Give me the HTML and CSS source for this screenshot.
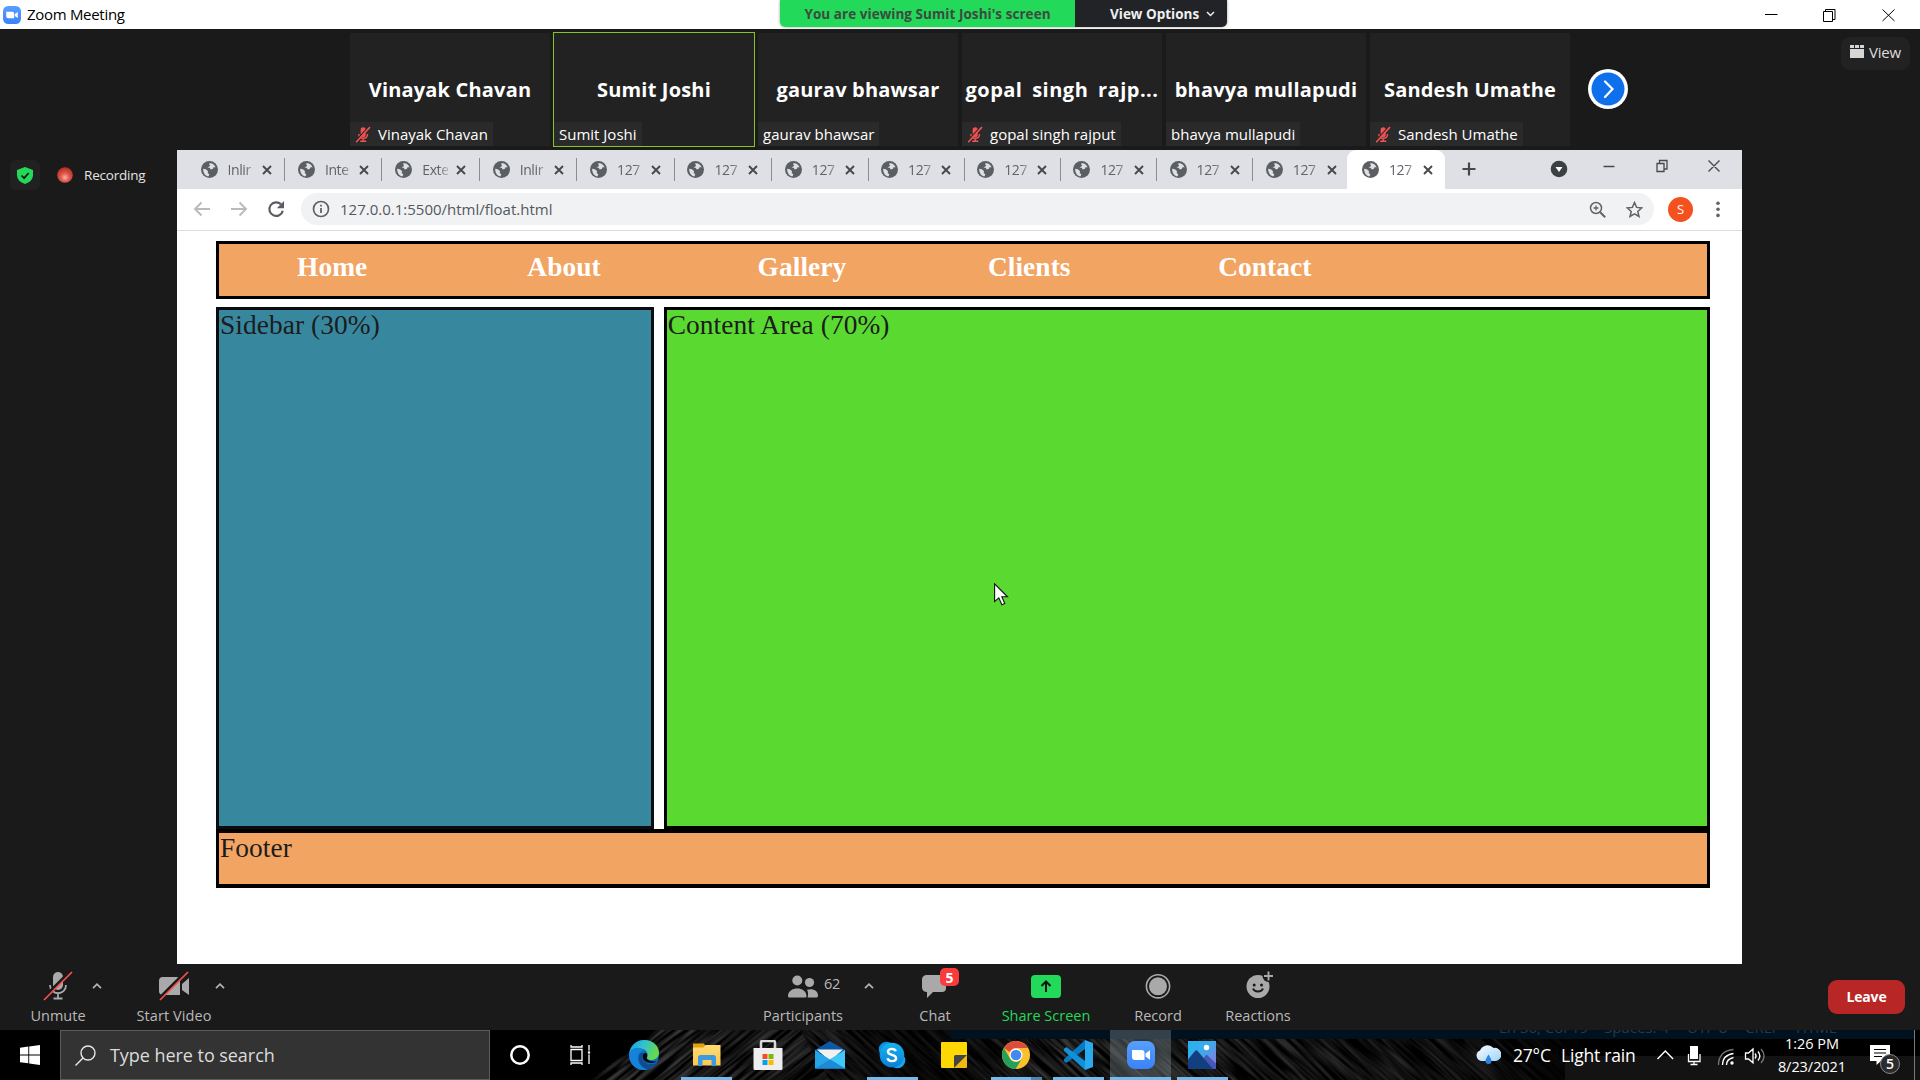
FILE: index.html
```html
<!DOCTYPE html>
<html lang="en">
<head>
<meta charset="utf-8">
<title>Zoom Meeting</title>
<link rel="stylesheet" href="styles.css">
</head>
<body>
<svg class="defs" width="0" height="0">
  <defs>
    <linearGradient id="zoomBlue" x1="0" y1="0" x2="0" y2="1"><stop offset="0" stop-color="#57a0fd"/><stop offset="1" stop-color="#3b82f8"/></linearGradient>
    <linearGradient id="edgeTop" x1="0" y1="0" x2="1" y2="0.4"><stop offset="0" stop-color="#1b9de2"/><stop offset=".5" stop-color="#2fc2cf"/><stop offset="1" stop-color="#67d94c"/></linearGradient>
    <linearGradient id="skype" x1="0" y1="0" x2="0" y2="1"><stop offset="0" stop-color="#14b4f0"/><stop offset="1" stop-color="#0a7fd6"/></linearGradient>
    <linearGradient id="folder" x1="0" y1="0" x2="0" y2="1"><stop offset="0" stop-color="#ffdc75"/><stop offset="1" stop-color="#fcc84e"/></linearGradient>
    <linearGradient id="sky" x1="0" y1="0" x2="1" y2="1"><stop offset="0" stop-color="#21b4ee"/><stop offset=".5" stop-color="#42a6ec"/><stop offset="1" stop-color="#a06ed6"/></linearGradient>
    <linearGradient id="cloud" x1="0" y1="0" x2="1" y2="1"><stop offset="0" stop-color="#fafdff"/><stop offset="1" stop-color="#9ed3f8"/></linearGradient>
    <radialGradient id="rec" cx=".5" cy=".65" r=".6"><stop offset="0" stop-color="#f7b5ac"/><stop offset=".45" stop-color="#e0594c"/><stop offset="1" stop-color="#b92f25"/></radialGradient>
    <symbol id="globe" viewBox="0 0 16 16"><circle cx="8" cy="8" r="8" fill="#5b5e63"/><path d="M2 7.200l2.600.6 2.100 1.900-.4 1.500 1.500 1.200-.6 2C4.200 14 2 11.500 2 7.200z M7.600 2.300c2.700-.6 5.300 1 6.100 3.900l-1.700-.5-.8 1.600-1.900.6-1.200-1.500-1.900-.3 2.300-1.400z" fill="#dfe0e5"/></symbol>
    <symbol id="cross" viewBox="0 0 10 10"><path d="M1 1l8 8M9 1l-8 8" stroke="#45484c" stroke-width="1.900" fill="none"/></symbol>
    <symbol id="mutemic" viewBox="0 0 16 18"><path d="M5.500 4a2.700 2.700 0 0 1 5.400 0v5a2.700 2.700 0 0 1-5.400 0z" fill="#f25353"/><path d="M3.600 8.500c0 6 9.200 6 9.200 0M8.200 13v3M5 16.200h6.500" stroke="#f25353" stroke-width="1.500" fill="none"/><path d="M0 17L14.500 1" stroke="#242424" stroke-width="2.400"/><path d="M.7 17.200L15.300 1.200" stroke="#f25353" stroke-width="1.700"/></symbol>
    <symbol id="caret" viewBox="0 0 10 6"><path d="M1 5.200l4-4 4 4" stroke="#b4b4b4" stroke-width="1.700" fill="none"/></symbol>
    <symbol id="camera" viewBox="0 0 28 28"><rect width="28" height="28" rx="8" fill="url(#zoomBlue)"/><path d="M5 9h9.500a3 3 0 0 1 3 3v7H8a3 3 0 0 1-3-3zM18.500 12.500L23 9.300v9.400l-4.500-3.200z" fill="#fff"/></symbol>
  </defs>
</svg>

<div class="screen">
  <header class="titlebar">
    <svg class="app-icon" width="18" height="18"><use href="#camera"/></svg>
    <span class="app-title">Zoom Meeting</span>
    <svg class="win-ctl" width="130" height="14" viewBox="0 0 130 14" fill="none" stroke="#000" stroke-width="1"><path d="M0 6.500h12.500M58.500 3.500h9v10h-9zM60.500 3.500v-2h9.500v10h-2M117.500 1.500l12 11.500M129.500 1.500L117.500 13"/></svg>
    <div class="share-banner"><span class="viewing">You are viewing Sumit Joshi's screen</span><span class="options">View Options <svg width="9" height="6" viewBox="0 0 9 6"><path d="M1 1l3.500 3.500L8 1" stroke="#eee" stroke-width="1.500" fill="none"/></svg></span></div>
  </header>

  <section class="gallery">
    <div class="tile"><b>Vinayak Chavan</b><span class="tag"><svg width="16" height="17"><use href="#mutemic"/></svg><i>Vinayak Chavan</i></span></div>
    <div class="tile speaking"><b>Sumit Joshi</b><span class="tag"><i>Sumit Joshi</i></span></div>
    <div class="tile"><b>gaurav bhawsar</b><span class="tag"><i>gaurav bhawsar</i></span></div>
    <div class="tile"><b class="long">gopal singh rajp...</b><span class="tag"><svg width="16" height="17"><use href="#mutemic"/></svg><i>gopal singh rajput</i></span></div>
    <div class="tile"><b>bhavya mullapudi</b><span class="tag"><i>bhavya mullapudi</i></span></div>
    <div class="tile"><b>Sandesh Umathe</b><span class="tag"><svg width="16" height="17"><use href="#mutemic"/></svg><i>Sandesh Umathe</i></span></div>
    <svg class="next" width="40" height="40" viewBox="0 0 40 40"><circle cx="20" cy="20" r="20" fill="#fff"/><circle cx="20" cy="20" r="16.500" fill="#0e71eb"/><path d="M17 12.500l7.500 7.500-7.500 8" stroke="#fff" stroke-width="2.200" fill="none" stroke-linecap="round"/></svg>
    <div class="view-btn"><svg width="14" height="13" viewBox="0 0 14 13" fill="#d6d6d6"><path d="M0 0h4v3H0zM5 0h4v3H5zM10 0h4v3h-4zM0 4h14v9H0z"/></svg><span>View</span></div>
  </section>

  <main class="stage">
    <aside class="status">
      <div class="shield"><svg width="16" height="17" viewBox="0 0 16 17"><path d="M8 0l8 3v5c0 4.500-3.500 7.500-8 9-4.500-1.500-8-4.500-8-9V3z" fill="#23d959"/><path d="M4.500 8.500l2.600 2.700L11.700 6" stroke="#1a1a1a" stroke-width="1.800" fill="none"/></svg></div>
      <svg class="rec" width="16" height="16" viewBox="0 0 16 16"><circle cx="8" cy="8" r="7.800" fill="url(#rec)"/></svg>
      <span class="rec-text">Recording</span>
    </aside>

    <div class="browser">
      <div class="tabstrip">
        <div class="tab wide"><svg width="17" height="17"><use href="#globe"/></svg><span>Inlir</span><svg width="10" height="10"><use href="#cross"/></svg></div>
        <div class="tab wide"><svg width="17" height="17"><use href="#globe"/></svg><span>Inte</span><svg width="10" height="10"><use href="#cross"/></svg></div>
        <div class="tab wide"><svg width="17" height="17"><use href="#globe"/></svg><span>Exte</span><svg width="10" height="10"><use href="#cross"/></svg></div>
        <div class="tab wide"><svg width="17" height="17"><use href="#globe"/></svg><span>Inlir</span><svg width="10" height="10"><use href="#cross"/></svg></div>
        <div class="tab wide"><svg width="17" height="17"><use href="#globe"/></svg><span>127</span><svg width="10" height="10"><use href="#cross"/></svg></div>
        <div class="tab wide"><svg width="17" height="17"><use href="#globe"/></svg><span>127</span><svg width="10" height="10"><use href="#cross"/></svg></div>
        <div class="tab"><svg width="17" height="17"><use href="#globe"/></svg><span>127</span><svg width="10" height="10"><use href="#cross"/></svg></div>
        <div class="tab"><svg width="17" height="17"><use href="#globe"/></svg><span>127</span><svg width="10" height="10"><use href="#cross"/></svg></div>
        <div class="tab"><svg width="17" height="17"><use href="#globe"/></svg><span>127</span><svg width="10" height="10"><use href="#cross"/></svg></div>
        <div class="tab"><svg width="17" height="17"><use href="#globe"/></svg><span>127</span><svg width="10" height="10"><use href="#cross"/></svg></div>
        <div class="tab"><svg width="17" height="17"><use href="#globe"/></svg><span>127</span><svg width="10" height="10"><use href="#cross"/></svg></div>
        <div class="tab last"><svg width="17" height="17"><use href="#globe"/></svg><span>127</span><svg width="10" height="10"><use href="#cross"/></svg></div>
        <div class="tab active"><svg width="17" height="17"><use href="#globe"/></svg><span>127</span><svg width="10" height="10"><use href="#cross"/></svg></div>
        <svg class="strip-ctl" width="270" height="20" viewBox="0 0 270 20" fill="none" stroke="#45484c"><path d="M10 3.500v13M3.500 10h13" stroke-width="2.200"/><circle cx="100" cy="10" r="8.300" fill="#3c4043" stroke="none"/><path d="M96.500 8h7L100 13z" fill="#fff" stroke="none"/><path d="M144.500 7.500h11M198 4.500h7v8h-7zM200.500 4.500v-3h7.500v8.500h-3M249.500 1.500l11 11M260.500 1.500l-11 11" stroke-width="1.300"/></svg>
      </div>
      <div class="toolbar">
        <svg class="nav" width="111" height="20" viewBox="0 0 111 20" fill="none"><path d="M20 10H5.500M11.500 3.500L5 10l6.500 6.500" stroke="#b9babc" stroke-width="1.900"/><path d="M41 10h14.500M49.500 3.500L56 10l-6.500 6.500" stroke="#b9babc" stroke-width="1.900"/><path d="M91 5.300a6.800 6.800 0 1 0 1.800 6.400" stroke="#5a5d61" stroke-width="2.200"/><path d="M94 2v7.300h-7.200z" fill="#5a5d61"/></svg>
        <div class="omnibox">
          <svg width="18" height="18" viewBox="0 0 18 18" fill="none" stroke="#5f6368"><circle cx="9" cy="9" r="7.500" stroke-width="1.700"/><path d="M9 8v5M9 4.700v1.800" stroke-width="1.800"/></svg>
          <span class="url">127.0.0.1:5500/html/float.html</span>
          <svg class="mag" width="17" height="17" viewBox="0 0 17 17" fill="none" stroke="#5f6368"><circle cx="7" cy="7" r="5.500" stroke-width="1.500"/><path d="M11.200 11.200l5 5" stroke-width="2"/><path d="M7 4.500v5M4.500 7h5" stroke-width="1.300"/></svg>
          <svg class="star" width="17" height="17" viewBox="0 0 17 17"><path d="M8.500 1.500l2.100 4.900 5.200.5-4 3.500 1.200 5.100-4.500-2.700L4 15.500l1.200-5.100-4-3.500 5.200-.5z" fill="none" stroke="#5f6368" stroke-width="1.500"/></svg>
        </div>
        <span class="avatar">S</span>
        <svg class="dots" width="4" height="17" viewBox="0 0 4 17" fill="#5f6368"><circle cx="2" cy="2.200" r="1.800"/><circle cx="2" cy="8.300" r="1.800"/><circle cx="2" cy="14.400" r="1.800"/></svg>
      </div>
      <div class="page">
        <nav class="menu"><a>Home</a><a>About</a><a>Gallery</a><a>Clients</a><a>Contact</a></nav>
        <div class="columns">
          <div class="sidebar">Sidebar (30%)</div>
          <div class="content">Content Area (70%)</div>
        </div>
        <div class="footer">Footer</div>
      </div>
      <svg class="cursor" width="15" height="23" viewBox="0 0 15 23"><path d="M.6.8v17.800l4.200-3.800 3.100 7 2.900-1.300-3-6.700h5.700z" fill="#fff" stroke="#111" stroke-width="1.100"/></svg>
    </div>
  </main>

  <section class="controls">
    <div class="ctl c-mic"><svg width="30" height="30" viewBox="0 0 30 30"><path d="M10 6a5 5 0 0 1 10 0v8a5 5 0 0 1-10 0z" fill="#a9a9a9"/><path d="M7 14c0 11 16 11 16 0M15 22v5M10.500 27.500h9" stroke="#a9a9a9" stroke-width="1.800" fill="none"/><path d="M0 27.500L27.500 0" stroke="#1a1a1a" stroke-width="3"/><path d="M1 29L29 1" stroke="#f4504f" stroke-width="1.700"/></svg><span>Unmute</span></div>
    <svg class="up u1" width="10" height="6"><use href="#caret"/></svg>
    <div class="ctl c-video"><svg width="30" height="30" viewBox="0 0 30 30"><path d="M4 6h14a3 3 0 0 1 3 3v15H4a4 4 0 0 1-4-4V9.500A3.500 3.500 0 0 1 4 6zM23 13l7-6v17l-7-5z" fill="#a9a9a9"/><path d="M0 27.500L27.500 0" stroke="#1a1a1a" stroke-width="3"/><path d="M1 29L29 1" stroke="#f4504f" stroke-width="1.700"/></svg><span>Start Video</span></div>
    <svg class="up u2" width="10" height="6"><use href="#caret"/></svg>
    <div class="ctl c-people"><svg width="30" height="30" viewBox="0 0 30 30" fill="#a9a9a9"><circle cx="9.300" cy="9.500" r="5"/><circle cx="21.500" cy="11.500" r="4.600"/><path d="M0 25c0-10 18.500-10 18.500 0 0 1-.7 1.500-1.700 1.500H1.700C.7 26.500 0 26 0 25zM19 18.800c5-1.800 11 .2 11 5.700 0 1.400-.6 2-1.800 2h-8.700c1-2.500.7-5.300-.5-7.700z"/></svg><span>Participants</span><em class="count">62</em></div>
    <svg class="up u3" width="10" height="6"><use href="#caret"/></svg>
    <div class="ctl c-chat"><svg width="30" height="30" viewBox="0 0 30 30" fill="#a9a9a9"><path d="M7 4h15a4 4 0 0 1 4 4v9a4 4 0 0 1-4 4H13l-6 6v-6a5 5 0 0 1-5-4V8a4.500 4.500 0 0 1 5-4z"/></svg><span>Chat</span><em class="badge">5</em></div>
    <div class="ctl c-share"><svg width="30" height="30" viewBox="0 0 30 30"><rect y="4" width="30" height="23" rx="4" fill="#23d959"/><path d="M15 21V10.500M10.500 15l4.500-4.500 4.500 4.500" stroke="#151515" stroke-width="2" fill="none"/></svg><span>Share Screen</span></div>
    <div class="ctl c-record"><svg width="30" height="30" viewBox="0 0 30 30"><circle cx="15" cy="15.300" r="11.600" fill="none" stroke="#a9a9a9" stroke-width="1.600"/><circle cx="15" cy="15.300" r="9" fill="#a9a9a9"/></svg><span>Record</span></div>
    <div class="ctl c-react"><svg width="30" height="30" viewBox="0 0 30 30"><circle cx="15" cy="15.500" r="11.500" fill="#a9a9a9"/><circle cx="25.500" cy="5" r="6" fill="#1a1a1a"/><path d="M25.500.5v9M21 5h9" stroke="#a9a9a9" stroke-width="1.900"/><circle cx="11.200" cy="14" r="1.500" fill="#1a1a1a"/><circle cx="18.500" cy="14" r="1.500" fill="#1a1a1a"/><path d="M10 17.500c1.500 4 8.500 4 10 0" stroke="#1a1a1a" stroke-width="2" fill="none"/></svg><span>Reactions</span></div>
    <button class="leave">Leave</button>
  </section>

  <footer class="taskbar">
    <svg class="fur" width="1920" height="50" viewBox="0 0 1920 50">
      <defs>
        <filter id="hair" x="0" y="0" width="1" height="1"><feTurbulence type="fractalNoise" baseFrequency="0.018 0.3" numOctaves="2" seed="4"/><feColorMatrix values="0 0 0 0 .17  0 0 0 0 .17  0 0 0 0 .17  2.400 0 0 0 -.8"/></filter>
        <linearGradient id="fade"><stop offset="0" stop-color="#000"/><stop offset=".12" stop-color="#000" stop-opacity=".1"/><stop offset=".3" stop-color="#000" stop-opacity=".35"/><stop offset=".38" stop-color="#000" stop-opacity=".8"/><stop offset=".52" stop-color="#000" stop-opacity=".2"/><stop offset=".66" stop-color="#000" stop-opacity=".3"/><stop offset=".88" stop-color="#000" stop-opacity=".5"/><stop offset="1" stop-color="#000"/></linearGradient>
        <clipPath id="left"><path d="M560 0h240l30 50H560z"/></clipPath>
        <clipPath id="right"><path d="M800 0h790v50H830z"/></clipPath>
      </defs>
      <g clip-path="url(#left)"><g transform="translate(400 200) rotate(-38)"><rect width="700" height="500" filter="url(#hair)" opacity=".6"/></g></g>
      <g clip-path="url(#right)"><g transform="translate(900 -600) rotate(42)"><rect width="1100" height="1100" filter="url(#hair)" opacity=".6"/></g></g>
      <rect x="490" width="1100" height="50" fill="url(#fade)"/>
      <path d="M1590 0h330v50h-330z" fill="#000"/><path d="M1565 26h355v24h-355z" fill="#131313"/>
    </svg>
    <div class="peek"><span class="p1">Ln 36, Col 19</span><span class="p2">Spaces: 4</span><span class="p3">UTF-8</span><span class="p4">CRLF</span><span class="p5">HTML</span></div>
    <div class="start"><svg width="20" height="20" viewBox="0 0 20 20" fill="#fff"><path d="M0 2.800L8.300 1.600V9.400H0zM9.200 1.500L20 0v9.400H9.200zM0 10.400h8.300v7.900L0 17.200zM9.200 10.400H20V20L9.200 18.500z"/></svg></div>
    <div class="search"><svg width="21" height="21" viewBox="0 0 21 21" fill="none" stroke="#e8e8e8" stroke-width="1.400"><circle cx="13" cy="8" r="7"/><path d="M8 13L.5 20.500"/></svg><span>Type here to search</span></div>
    <div class="apps">
      <div class="app"><svg width="30" height="30" viewBox="0 0 30 30"><circle cx="15" cy="15" r="8.700" fill="none" stroke="#fff" stroke-width="2.500"/></svg></div>
      <div class="app"><svg width="30" height="30" viewBox="0 0 30 30" fill="none" stroke="#fff" stroke-width="1.300"><path d="M4 9.500h11v11H4zM4 5v2h11V5M4 25v-2h11v2M22 5v19"/><path d="M20.500 11h3v3h-3z" fill="#fff" stroke="#000" stroke-width="0.800"/></svg></div>
      <div class="app"><svg width="30" height="30" viewBox="0 0 30 30"><circle cx="15" cy="15" r="15" fill="#0d6ac2"/><path d="M.2 13C2 5 8 0 15 0c9 0 15 6 15 12.500 0 5-4 7.500-8 7.500-3 0-4.500-1.200-4-2.200 1.300-2 1-6.500-3-8.300C9 7 3 9 .2 13z" fill="url(#edgeTop)"/><path d="M.2 13C3 7 11 6.500 15.500 10c-4 .5-7.500 5-6.500 10 1 5 5 8.500 10 9.500C8 32-1 24 .2 13z" fill="#1683da"/><path d="M11 13.500c-3 5-1 14.500 8.500 16C24 28 27 25 28.500 22.500c-6 3-14 1.500-15-4.500-.2-2 .6-3.600 1.500-4.500-1.500-.5-3-.5-4 0z" fill="#104d8e"/><path d="M14.200 14.500c-1.400 3 .3 8 8 8.500 3 .2 4.800-1 6-2-1.500 1-9 1-10.500-3 .8-1.500.5-3.300 0-4.500-1-.8-2.800-.5-3.500 1z" fill="#05090d"/></svg></div>
      <div class="app on"><svg width="30" height="30" viewBox="0 0 30 30"><path d="M2 3.500h11l1.500 2.500v4H2z" fill="#e2a20e"/><path d="M2 7.500h10.500L14.500 5H29.500v20.500H2z" fill="url(#folder)"/><path d="M7 26V17.500A2.500 2.500 0 0 1 9.500 15h13a2.500 2.500 0 0 1 2.500 2.500V26h-4.500v-6h-9v6z" fill="#3d9ae0"/></svg></div>
      <div class="app"><svg width="30" height="30" viewBox="0 0 30 30"><path d="M8 8V2.500A1.500 1.500 0 0 1 9.500 1h11A1.500 1.500 0 0 1 22 2.500V8" fill="none" stroke="#d8d8d8" stroke-width="2.600"/><path d="M.5 8h29v20.500a1.500 1.500 0 0 1-1.500 1.500H2a1.500 1.500 0 0 1-1.500-1.500z" fill="#eee"/><path d="M9.500 14h5v5h-5z" fill="#f25022"/><path d="M15.500 14h5v5h-5z" fill="#7fba00"/><path d="M9.500 20h5v5h-5z" fill="#00a4ef"/><path d="M15.500 20h5v5h-5z" fill="#ffb900"/></svg></div>
      <div class="app"><svg width="30" height="30" viewBox="0 0 30 30"><path d="M0 10L15 1l15 9v3H0z" fill="#0d57a5"/><path d="M2 9.500h26l-13 12z" fill="#f1f1f1"/><path d="M0 10l15 9.500L30 10v18.500H0z" fill="#25a5e8"/><path d="M15 19.500L30 10v18.500z" fill="#3fc8f8"/><path d="M0 28.500h30L15 19.500z" fill="#1c8ad6"/></svg></div>
      <div class="app on"><svg width="30" height="30" viewBox="0 0 30 30"><circle cx="9.500" cy="9.500" r="7.800" fill="#0f8fe0"/><circle cx="20.500" cy="20.500" r="7.800" fill="#1ba2ea"/><circle cx="15" cy="15" r="12.300" fill="url(#skype)"/><path d="M18.800 11.200c-.6-1.700-2-2.300-3.900-2.300-2.300 0-4 1-4 2.900 0 4 8.200 2 8.200 6.200 0 2-1.800 3.100-4.100 3.100s-4-.9-4.500-2.900" stroke="#fff" stroke-width="2.400" fill="none"/></svg></div>
      <div class="app"><svg width="30" height="30" viewBox="0 0 30 30"><path d="M3 2h24a1 1 0 0 1 1 1v12L15 28H3a1 1 0 0 1-1-1V3a1 1 0 0 1 1-1z" fill="#ffd803"/><path d="M15 28V16.500A1.500 1.500 0 0 1 16.500 15H28z" fill="#444"/><path d="M15 28l13-13v12a1 1 0 0 1-1 1z" fill="#efb90f"/></svg></div>
      <div class="app on multi"><svg width="30" height="30" viewBox="0 0 30 30"><circle cx="15" cy="15" r="14" fill="#fbc02e"/><path d="M2.900 8A14 14 0 0 1 27.100 8H15a7 7 0 0 0-6.300 4z" fill="#dd4b3e"/><path d="M2.900 8A14 14 0 0 0 14.500 29L20.700 19A7 7 0 0 1 8.900 18.500z" fill="#21a15a"/><circle cx="15" cy="15" r="6.500" fill="#fff"/><circle cx="15" cy="15" r="5.300" fill="#4688f1"/></svg></div>
      <div class="app on"><svg width="30" height="30" viewBox="0 0 30 30"><path d="M22 0L30 3v24l-8 3z" fill="#29a9ee"/><path d="M22 0L1 19.200v2L3.500 23 22 9z" fill="#0879c2"/><path d="M22 30L1 10.800v-2L3.500 7 22 21z" fill="#1191d8"/></svg></div>
      <div class="app on current"><svg width="28" height="28" viewBox="0 0 28 28"><use href="#camera"/></svg></div>
      <div class="app on"><svg width="30" height="30" viewBox="0 0 30 30"><path d="M1 1h28v28H1z" fill="url(#sky)"/><circle cx="19.500" cy="7.500" r="2.700" fill="#fff"/><path d="M12 24l7.500-9.500 9.500 9v5.500H10z" fill="#4458b8"/><path d="M1 19.500l7-8.500a1.800 1.800 0 0 1 2.600 0L26 29H1z" fill="#123f80"/></svg></div>
    </div>
    <div class="tray">
      <svg class="weather" width="26" height="22" viewBox="0 0 26 22"><path d="M6 17a5.500 5.500 0 0 1-1-10.500A8 8 0 0 1 18.500 4 6.500 6.500 0 0 1 21 17z" fill="url(#cloud)"/><path d="M13.500 10.500c1.700 3 3 4.500 3 6.500a3 3 0 0 1-6 0c0-2 1.300-3.500 3-6.500z" fill="#2a82e4"/></svg>
      <span class="temp">27°C</span><span class="cond">Light rain</span>
      <svg class="tray-icons" width="110" height="24" viewBox="0 0 110 24" fill="none" stroke="#fff"><path d="M1.500 16l7.800-8 7.800 8" stroke-width="1.400"/><path d="M34 3h8v13h-8z" fill="#fff" stroke="none"/><path d="M32.500 11v7.500H44V11M38 18v4M34.500 21.500h7" stroke-width="1.300"/><path d="M62.500 22c0-9 5.500-15 15-15.500" stroke="#777" stroke-width="1.300"/><path d="M66.500 22c0-6.500 4-10.500 11-11.500M70.500 22c0-4 2.500-6.500 7-7.500" stroke-width="1.300"/><circle cx="76" cy="20" r="1.700" fill="#fff" stroke="none"/><path d="M89.500 10v6h3l4.500 3.800V6L92.500 10zM99 10.500c1.300 1.500 1.300 3.500 0 5M102 8.500c2.500 3 2.500 6 0 9" stroke-width="1.300"/><path d="M105 6c4 4.500 4 9.500 0 14" stroke="#777" stroke-width="1.300"/></svg>
      <div class="clock"><span class="time">1:26 PM</span><span class="date">8/23/2021</span></div>
      <div class="notif"><svg width="20" height="20" viewBox="0 0 20 20"><path d="M0 0h20v16h-9l-4.500 4v-4H0z" fill="#fff"/><path d="M4 4.500h12M4 8h12M4 11.500h8" stroke="#000" stroke-width="1.200"/></svg><em>5</em></div>
    </div>
  </footer>
</div>
</body>
</html>
```
FILE: styles.css
```css
* { box-sizing: border-box; }
body { margin: 0; background: #1a1a1a; font-family: "Open Sans", "Noto Sans", sans-serif; overflow: hidden; }
svg { display: block; flex: none; }
i, em { font-style: normal; }
span, b, i, em { white-space: nowrap; }
.defs { position: absolute; }
.screen { width: 1920px; height: 1080px; display: flex; flex-direction: column; }

/* title bar */
.titlebar { position: relative; height: 29px; background: #fff; display: flex; align-items: center; padding: 0 25px 0 3px; flex: none; }
.app-title { margin-left: 6px; font-size: 15px; color: #000; letter-spacing: -0.3px; line-height: 20px; padding-bottom: 1px; }
.win-ctl { margin-left: auto; }
.share-banner { position: absolute; left: 780px; top: 0; height: 27px; display: flex; border-radius: 0 0 5px 5px; overflow: hidden; font-size: 13.500px; font-weight: 700; line-height: 28px; box-shadow: 0 0 3px #999; }
.viewing { width: 295px; background: #23d959; color: #3d4a40; text-align: center; letter-spacing: 0.050px; }
.options { width: 152px; background: #222327; color: #f0f0f0; display: flex; align-items: center; gap: 7px; padding-left: 35px; padding-top: 1px; }

/* participants */
.gallery { height: 121px; display: flex; gap: 4px; padding: 4px 10px 4px 350px; flex: none; }
.tile { width: 200px; height: 113px; background: #222; display: flex; flex-direction: column; justify-content: flex-end; align-items: flex-start; flex: none; }
.speaking { outline: 1px solid #85c51f; }
.tile b { align-self: center; color: #fff; font-size: 20px; line-height: 28px; margin-bottom: 18px; letter-spacing: 0.180px; }
.tile b.long { letter-spacing: 0.500px; word-spacing: 4px; }
.tag { height: 24px; background: #2a2a2a; display: flex; align-items: center; padding: 0 5px; gap: 7px; color: #fff; }
.tag i { font-size: 15px; line-height: 24px; }
.next { margin: 36px 0 0 14px; }
.view-btn { margin: 4px 0 0 auto; width: 69px; height: 33px; border-radius: 9px; background: #222; color: #ddd; display: flex; align-items: center; gap: 5px; padding-left: 9px; font-size: 15px; letter-spacing: -0.200px; padding-bottom: 4px; }

/* stage */
.stage { height: 814px; display: flex; flex: none; }
.status { width: 177px; height: 50px; padding-left: 10px; display: flex; align-items: center; }
.shield { width: 30px; height: 30px; border-radius: 6px; background: #212121; display: flex; align-items: center; justify-content: center; }
.rec { margin-left: 17px; }
.rec-text { margin-left: 11px; color: #e4e4e4; font-size: 13.500px; letter-spacing: -0.200px; }
.browser { position: relative; width: 1565px; background: #fff; display: flex; flex-direction: column; }
.tabstrip { height: 39px; background: #dfe0e5; display: flex; padding-left: 11px; }
.tab { width: 96.200px; height: 39px; display: flex; align-items: center; padding-left: 12.500px; position: relative; flex: none; }
.tab.wide { width: 97.400px; }
.tab::after { content: ""; width: 1px; height: 23px; background: #8b8c90; margin-left: 12.500px; }
.tab.last::after, .tab.active::after { display: none; }
.tab span { width: 26px; margin: 0 8px 0 10px; font-size: 14px; color: #5f6368; letter-spacing: -0.400px; -webkit-mask-image: linear-gradient(90deg, #000 65%, rgba(0, 0, 0, .3)); }
.tab.active { width: 98px; background: #fff; border-radius: 9px 9px 0 0; margin-left: -2px; padding-left: 14.500px; }
.strip-ctl { margin: 9px 0 0 14px; }
.toolbar { height: 42px; display: flex; align-items: center; border-bottom: 1px solid #dcdcdc; padding: 0 0 1px 13px; flex: none; }
.omnibox { width: 1353px; height: 32px; border-radius: 16px; background: #f1f2f4; display: flex; align-items: center; padding: 0 11px 0 11px; }
.url { margin-left: 10px; font-size: 15px; color: #55585c; }
.mag { margin-left: auto; }
.star { margin-left: 20px; }
.avatar { width: 25px; height: 25px; margin-left: 14px; border-radius: 50%; background: #f4511e; color: #fff; text-align: center; font-size: 13px; line-height: 25px; }
.dots { margin-left: 23px; }

/* shared web page */
.page { padding: 10px 32px 0 39px; font-family: "Liberation Serif", serif; font-size: 27.400px; color: #1c1c1c; letter-spacing: 0.070px; }
.menu { width: 1494px; height: 58px; border: 3px solid #000; background: #f2a463; display: flex; padding-left: 78px; line-height: 46px; font-weight: 700; color: #fff; }
.menu a { width: 230.300px; }
.columns { display: flex; gap: 10px; margin-top: 8px; line-height: 31px; }
.sidebar { width: 438px; height: 522px; border: 3px solid #0c0c10; background: #37889f; padding: 0 1px; }
.content { width: 1047px; height: 522px; border: 3px solid #000; background: #5ad931; padding: 0 1px; }
.footer { width: 1494px; height: 59px; border: 4px solid #000; border-width: 4px 3px; background: #f2a463; line-height: 31px; padding-left: 1px; }
.cursor { position: absolute; left: 817px; top: 433px; }

/* meeting controls */
.controls { height: 66px; display: flex; background: #1a1a1a; color: #b9b9b9; flex: none; }
.ctl { position: relative; width: 100px; display: flex; flex-direction: column; align-items: center; padding-top: 7px; flex: none; }
.ctl svg { margin-bottom: 4px; }
.ctl span { font-size: 14.500px; line-height: 22px; }
.up { margin-top: 19px; }
.c-mic { margin-left: 8px; }
.u1 { margin-left: -16px; }
.c-video { margin-left: 22px; }
.c-video span { letter-spacing: 0.100px; }
.u2 { margin-left: -9px; }
.c-people { margin-left: 528px; }
.u3 { margin-left: 11px; }
.c-chat { margin-left: 11px; }
.c-share { margin-left: 11px; }
.c-share span { color: #23d959; }
.c-record { margin-left: 12px; }
.c-react { margin-left: 0; }
.count { position: absolute; left: 71px; top: 10px; font-size: 14.500px; line-height: 20px; letter-spacing: -0.400px; }
.badge { position: absolute; left: 55px; top: 4px; width: 19px; height: 18px; border-radius: 5px; background: #f93b3b; color: #fff; font-size: 14px; font-weight: 700; line-height: 19px; text-align: center; }
.leave { margin: 16px 15px 0 auto; width: 77px; height: 34px; border: 0; border-radius: 9px; background: #b92626; color: #fff; font: 700 14px "Open Sans", sans-serif; letter-spacing: -0.150px; padding: 0 0 1px; }

/* taskbar */
.taskbar { position: relative; height: 50px; background: #000; display: flex; overflow: hidden; color: #fff; flex: none; }
.fur { position: absolute; left: 0; top: 0; }
.peek { position: absolute; left: 951px; top: 0; width: 963px; height: 9px; background: #001220; overflow: hidden; color: #2c3940; font-size: 15px; line-height: 9px; display: flex; padding-left: 548px; }
.peek span { position: relative; top: -7px; }
.p1 { width: 105px; } .p2 { width: 83px; } .p3 { width: 58px; } .p4 { width: 51px; }
.start { position: relative; width: 60px; display: flex; align-items: center; justify-content: center; }
.search { position: relative; width: 430px; background: #333; border: 1px solid #5c5c5c; display: flex; align-items: center; gap: 14px; padding-left: 14px; color: #dcdcdc; font-size: 18px; letter-spacing: -0.050px; }
.apps { position: relative; display: flex; margin-left: -1px; }
.app { width: 62px; display: flex; align-items: center; justify-content: center; position: relative; }
.app.on::after { content: ""; position: absolute; left: 6px; right: 5px; bottom: 0; height: 3px; background: #76b9ed; }
.app.multi::after { background: linear-gradient(90deg, #76b9ed 40px, #5584ab 40px); }
.app.current { background: rgba(120, 130, 138, .42); width: 61px; margin-left: 1px; }
.app.current::after { left: 0; right: 0; }
.tray { position: relative; margin-left: auto; display: flex; align-items: center; width: 445px; }
.temp { margin-left: 12px; width: 48px; font-size: 17.500px; letter-spacing: -0.200px; }
.cond { width: 95px; font-size: 17.500px; letter-spacing: -0.200px; }
.clock { width: 80px; margin-left: 6px; display: flex; flex-direction: column; align-items: center; font-size: 14.500px; letter-spacing: -0.050px; line-height: 23px; }
.notif { position: relative; width: 46px; height: 50px; padding: 15px 0 0 1px; margin-left: 17px; border-right: 1px solid #777; }
.notif em { position: absolute; left: 11px; top: 24px; width: 20px; height: 20px; border: 1px solid #888; border-radius: 50%; background: #2b2b2b; font-size: 14px; font-weight: 600; line-height: 18px; text-align: center; }
```
